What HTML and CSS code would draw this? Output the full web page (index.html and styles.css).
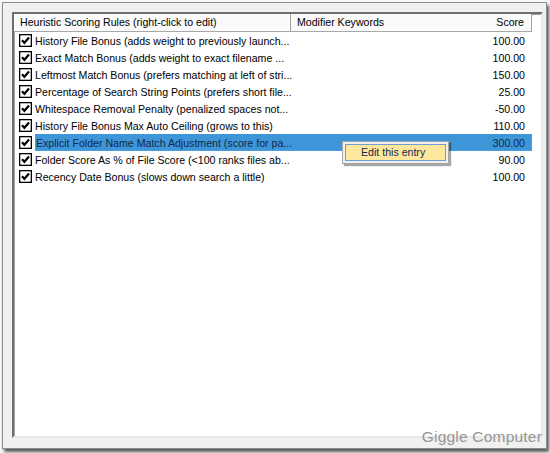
FILE: index.html
```html
<!DOCTYPE html>
<html>
<head>
<meta charset="utf-8">
<link rel="stylesheet" href="styles.css">
</head>
<body>
<div class="window">
  <div class="listbox">
    <div class="header">
      <div class="hcell h1">Heuristic Scoring Rules (right-click to edit)</div>
      <div class="hcell h2"><span>Modifier Keywords</span><span class="hscore">Score</span></div>
    </div>
    <div class="rows">
      <div class="row"><span class="cb"><svg width="13" height="13" viewBox="0 0 13 13"><rect x="0.5" y="0.5" width="12" height="12" fill="#fff" stroke="#000" stroke-width="1.6"/><path d="M3 6.2 L5.4 8.8 L10 3.6" fill="none" stroke="#000" stroke-width="2.2"/></svg></span><span class="name">History File Bonus (adds weight to previously launch...</span><span class="score">100.00</span></div>
      <div class="row"><span class="cb"><svg width="13" height="13" viewBox="0 0 13 13"><rect x="0.5" y="0.5" width="12" height="12" fill="#fff" stroke="#000" stroke-width="1.6"/><path d="M3 6.2 L5.4 8.8 L10 3.6" fill="none" stroke="#000" stroke-width="2.2"/></svg></span><span class="name">Exact Match Bonus (adds weight to exact filename ...</span><span class="score">100.00</span></div>
      <div class="row"><span class="cb"><svg width="13" height="13" viewBox="0 0 13 13"><rect x="0.5" y="0.5" width="12" height="12" fill="#fff" stroke="#000" stroke-width="1.6"/><path d="M3 6.2 L5.4 8.8 L10 3.6" fill="none" stroke="#000" stroke-width="2.2"/></svg></span><span class="name">Leftmost Match Bonus (prefers matching at left of stri...</span><span class="score">150.00</span></div>
      <div class="row"><span class="cb"><svg width="13" height="13" viewBox="0 0 13 13"><rect x="0.5" y="0.5" width="12" height="12" fill="#fff" stroke="#000" stroke-width="1.6"/><path d="M3 6.2 L5.4 8.8 L10 3.6" fill="none" stroke="#000" stroke-width="2.2"/></svg></span><span class="name">Percentage of Search String Points (prefers short file...</span><span class="score">25.00</span></div>
      <div class="row"><span class="cb"><svg width="13" height="13" viewBox="0 0 13 13"><rect x="0.5" y="0.5" width="12" height="12" fill="#fff" stroke="#000" stroke-width="1.6"/><path d="M3 6.2 L5.4 8.8 L10 3.6" fill="none" stroke="#000" stroke-width="2.2"/></svg></span><span class="name">Whitespace Removal Penalty (penalized spaces not...</span><span class="score">-50.00</span></div>
      <div class="row"><span class="cb"><svg width="13" height="13" viewBox="0 0 13 13"><rect x="0.5" y="0.5" width="12" height="12" fill="#fff" stroke="#000" stroke-width="1.6"/><path d="M3 6.2 L5.4 8.8 L10 3.6" fill="none" stroke="#000" stroke-width="2.2"/></svg></span><span class="name">History File Bonus Max Auto Ceiling (grows to this)</span><span class="score">110.00</span></div>
      <div class="row selected"><span class="cb"><svg width="13" height="13" viewBox="0 0 13 13"><rect x="0.5" y="0.5" width="12" height="12" fill="#fff" stroke="#000" stroke-width="1.6"/><path d="M3 6.2 L5.4 8.8 L10 3.6" fill="none" stroke="#000" stroke-width="2.2"/></svg></span><span class="sel"><span class="name">Explicit Folder Name Match Adjustment (score for pa...</span><span class="score">300.00</span></span></div>
      <div class="row"><span class="cb"><svg width="13" height="13" viewBox="0 0 13 13"><rect x="0.5" y="0.5" width="12" height="12" fill="#fff" stroke="#000" stroke-width="1.6"/><path d="M3 6.2 L5.4 8.8 L10 3.6" fill="none" stroke="#000" stroke-width="2.2"/></svg></span><span class="name">Folder Score As % of File Score (&lt;100 ranks files ab...</span><span class="score">90.00</span></div>
      <div class="row"><span class="cb"><svg width="13" height="13" viewBox="0 0 13 13"><rect x="0.5" y="0.5" width="12" height="12" fill="#fff" stroke="#000" stroke-width="1.6"/><path d="M3 6.2 L5.4 8.8 L10 3.6" fill="none" stroke="#000" stroke-width="2.2"/></svg></span><span class="name">Recency Date Bonus (slows down search a little)</span><span class="score">100.00</span></div>
    </div>
    <div class="menu"><div class="menuitem">Edit this entry</div></div>
  </div>
  <div class="watermark">Giggle Computer</div>
</div>
</body>
</html>
```

FILE: styles.css
```css
html, body {
  margin: 0;
  padding: 0;
  background: #f7f7f7;
  width: 550px;
  height: 453px;
  overflow: hidden;
  font-family: "Liberation Sans", Arial, sans-serif;
}
.window {
  position: relative;
  box-sizing: border-box;
  margin: 2px 0 0 2px;
  width: 545px;
  height: 447px;
  border: 1px solid #8c8c8c;
  background: #f0f0f0;
  box-shadow: 2px 3px 3px rgba(0,0,0,0.65);
  padding: 9px 2px 10px 9px;
}
.listbox {
  position: relative;
  box-sizing: border-box;
  width: 531px;
  height: 426px;
  background: #fff;
  border-style: solid;
  border-width: 2px;
  border-color: #6f6f6f #e8e8e8 #e8e8e8 #6f6f6f;
  box-shadow: inset 1px 1px 0 #a0a0a0;
  padding-right: 9px;
  font-size: 10.6px;
  color: #000;
}
.header {
  display: flex;
  height: 18px;
  box-sizing: border-box;
  border-bottom: 1px solid #a8a8a8;
  background: #fafafa;
}
.hcell {
  box-sizing: border-box;
  height: 17px;
  line-height: 17px;
  border-right: 1px solid #a0a0a0;
  box-shadow: inset -1px 0 0 #fff;
  white-space: nowrap;
}
.h1 {
  width: 277px;
  padding-left: 6px;
}
.h2 {
  flex: 1;
  display: flex;
  justify-content: space-between;
  padding-left: 6px;
  padding-right: 7px;
}
.rows {
  display: flex;
  flex-direction: column;
}
.row {
  display: flex;
  align-items: center;
  height: 17px;
  white-space: nowrap;
}
.cb {
  display: flex;
  width: 13px;
  height: 13px;
  margin-left: 5px;
  margin-right: 2px;
}
.name {
  flex: 1;
  padding-left: 1px;
  overflow: hidden;
}
.score {
  padding-right: 7px;
  text-align: right;
}
.sel {
  flex: 1;
  display: flex;
  align-items: center;
  height: 17px;
  box-sizing: border-box;
  margin-left: 1px;
  background: #3e96d8;
  color: #0f2a4a;
  border: 1px dotted #d8883a;
  border-top-color: #3e96d8;
  border-right-color: #d8883a;
}
.sel .name {
  padding-left: 0;
}
.sel .score {
  padding-right: 6px;
}
.menu {
  position: absolute;
  left: 328px;
  top: 127px;
  width: 107px;
  height: 23px;
  box-sizing: border-box;
  background: #f0f0f0;
  border: 1px solid #a6a6a6;
  padding: 2px;
  box-shadow: 2px 2px 1px rgba(0,0,0,0.35);
}
.menuitem {
  box-sizing: border-box;
  height: 17px;
  line-height: 15px;
  border: 1px solid #6e9fd0;
  background: #ffe79e;
  color: #0f2a4a;
  padding-left: 15px;
  font-size: 10.6px;
}
.watermark {
  position: absolute;
  right: 4px;
  bottom: 2px;
  font-size: 15.5px;
  color: #959595;
  letter-spacing: 0.2px;
}
```
